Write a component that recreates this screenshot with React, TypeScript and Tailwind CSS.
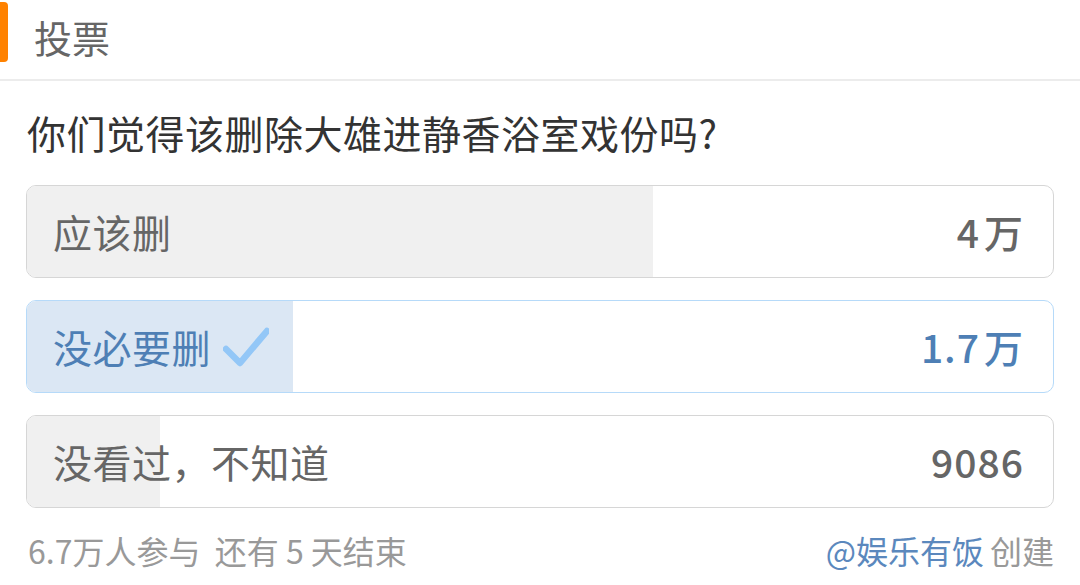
const options = [
  { label: "应该删", num: "4", unit: "万", pct: 61, voted: false },
  { label: "没必要删", num: "1.7", unit: "万", pct: 25.9, voted: true },
  { label: "没看过，不知道", num: "9086", unit: "", pct: 13, voted: false },
]

function Check() {
  return (
    <svg width="46" height="42" viewBox="0 0 46 42" className="ml-[12px]">
      <path d="M3 23 L17 37 L44 5" fill="none" stroke="#93c7f7" strokeWidth="6.5" strokeLinecap="round" strokeLinejoin="round" />
    </svg>
  )
}

export default function App() {
  return (
    <div className="w-[1080px] h-[585px] bg-white overflow-hidden font-['Noto_Sans_CJK_SC','Noto_Sans',sans-serif]">
      {/* header */}
      <header className="h-[81px] flex border-b-2 border-[#ececec]">
        <div className="w-[8px] h-[60px] mt-[2px] rounded-r-[4px] bg-[#ff8200]" />
        <h1 className="ml-[26px] mt-[12px] text-[38px] leading-[50px] text-[#666]">投票</h1>
      </header>

      <main className="px-[26px]">
        <p className="mt-[25px] mb-[26px] text-[39px] leading-[53px] tracking-[0.5px] text-[#333] pl-[1px]">
          你们觉得该删除大雄进静香浴室戏份吗?
        </p>

        <div className="flex flex-col gap-[22px]">
          {options.map((o) => (
            <div
              key={o.label}
              className={
                "relative h-[93px] rounded-[10px] border overflow-hidden " +
                (o.voted ? "border-[#b6daf9]" : "border-[#d6d6d6]")
              }
            >
              <div
                className={"absolute inset-y-0 left-0 " + (o.voted ? "bg-[#dbe7f4]" : "bg-[#f0f0f0]")}
                style={{ width: o.pct + "%" }}
              />
              <div className="relative h-full flex items-center justify-between pl-[26px] pr-[30px]">
                <span
                  className={
                    "flex items-center text-[39px] tracking-[0.5px] " + (o.voted ? "text-[#4e7fb5]" : "text-[#666]")
                  }
                >
                  {o.label}
                  {o.voted && <Check />}
                </span>
                <span className={"flex items-center text-[39px] font-medium " + (o.voted ? "text-[#4e7fb5]" : "text-[#666]")}>
                  <span className="tracking-[1px] -mr-[1px]">{o.num}</span>
                  {o.unit && <span className="ml-[5px]">{o.unit}</span>}
                </span>
              </div>
            </div>
          ))}
        </div>

        <div className="mt-[20px] flex items-center justify-between text-[32px] leading-[44px] text-[#999]">
          <span className="pl-[2px]">6.7万人参与&nbsp;&nbsp;还有 5 天结束</span>
          <span>
            <span className="text-[#5b88bd]">@娱乐有饭</span>
            <span className="ml-[6px]">创建</span>
          </span>
        </div>
      </main>
    </div>
  )
}
